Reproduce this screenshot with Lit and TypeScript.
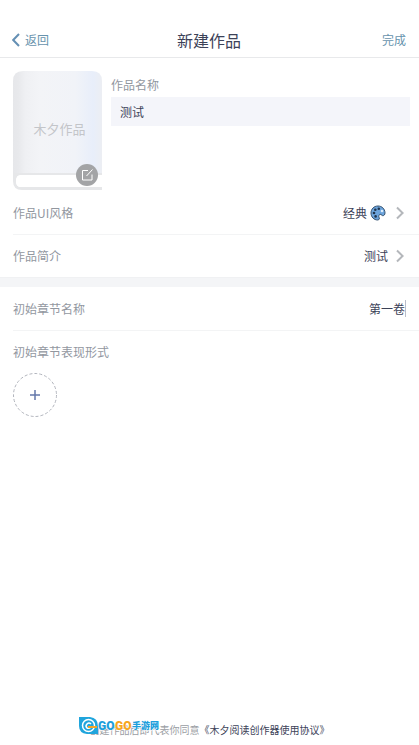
import { LitElement, html, css } from "lit";
import { customElement, property } from "lit/decorators.js";

@customElement("chevron-icon")
class ChevronIcon extends LitElement {
  static styles = css`
    :host { display: flex; color: #b4b7bb; }
    svg { width: 8px; height: 14px; fill: none; stroke: currentColor; stroke-width: 2; }
  `;
  render() {
    return html`<svg viewBox="0 0 8 14" aria-hidden="true"><path d="M1 1.5 L6.6 7 L1 12.5" /></svg>`;
  }
}

@customElement("book-cover")
class BookCover extends LitElement {
  @property() label = "";
  static styles = css`
    :host { display: block; position: relative; width: 89px; height: 119px; flex: none; }
    .art { display: block; width: 100%; height: 100%; }
    .label {
      position: absolute; left: 0; right: 0; top: 48px; padding-left: 4px;
      text-align: center; font-size: 13px; line-height: 20px; color: #c3c5c9;
    }
    .edit {
      position: absolute; right: 4px; bottom: 4px; width: 22px; height: 22px; padding: 0;
      border: 0; border-radius: 50%; background: #a3a4a6; display: grid; place-items: center;
    }
    .edit svg { width: 14px; height: 14px; fill: none; stroke: #fff; stroke-width: 1; }
  `;
  render() {
    return html`
      <svg class="art" viewBox="0 0 89 119" aria-hidden="true">
        <defs>
          <linearGradient id="face">
            <stop offset="0" stop-color="#e6e7ea" />
            <stop offset=".06" stop-color="#e8e9ec" />
            <stop offset=".14" stop-color="#eff0f3" />
            <stop offset=".3" stop-color="#f3f4f7" />
            <stop offset=".7" stop-color="#f1f3f8" />
            <stop offset=".9" stop-color="#e8eefa" />
            <stop offset="1" stop-color="#eceef3" />
          </linearGradient>
        </defs>
        <path fill="url(#face)" d="M0 10 Q0 0 10 0 H79 Q89 0 89 10 V104 H0 Z" />
        <path fill="#e6e7e9" d="M0 102 H89 V104 H8 Q3 104 3 110 Q3 116 8 116 H89 V119 H9 Q0 119 0 110 Z" />
        <path fill="#fff" d="M89 104 H8 Q3 104 3 110 Q3 116 8 116 H89 Z" />
      </svg>
      <span class="label">${this.label}</span>
      <button class="edit" aria-label="编辑封面">
        <svg viewBox="0 0 14 14"><path d="M8 2.5 H2.5 V12 H12 V6.5 M6.5 8 L12.5 1.5" /></svg>
      </button>
    `;
  }
}

@customElement("app-root")
class AppRoot extends LitElement {
  static styles = css`
    :host {
      display: flex; flex-direction: column; min-height: 100vh; background: #fff; color: #3c4258;
      font: 12px/20px "Noto Sans CJK SC", "Noto Sans", sans-serif;
    }
    * { box-sizing: border-box; }
    button, input { font: inherit; color: inherit; border: 0; background: none; padding: 0; margin: 0; outline: none; }
    header {
      display: grid; grid-template-columns: 1fr auto 1fr; align-items: center;
      padding: 22px 13px 0 12px; height: 58px; border-bottom: 1px solid #e8e9eb;
    }
    .back, .done { color: #6793ad; }
    .back { justify-self: start; display: flex; align-items: center; gap: 5px; }
    .back svg { width: 8px; height: 14px; fill: none; stroke: #6590b4; stroke-width: 2; }
    .done { justify-self: end; }
    h1 { margin: 0; font-size: 16px; line-height: 24px; font-weight: 400; }
    .work { display: flex; gap: 9px; padding: 13px 9px 1px 13px; }
    .name { flex: 1; display: flex; flex-direction: column; gap: 2px; padding-top: 4px; min-width: 0; }
    label, .caption { color: #92979f; }
    .name input { width: 100%; height: 29px; padding: 0 9px; background: #f4f5fa; }
    .row {
      display: flex; align-items: center; justify-content: space-between;
      margin-left: 13px; padding-right: 15px; height: 43px;
    }
    .row + .row { border-top: 1px solid #f3f4f5; }
    .first { border-bottom: 1px solid #f0f1f3; }
    .value { display: flex; align-items: center; gap: 3px; }
    .value chevron-icon { margin-left: 5px; }
    .palette { width: 16px; height: 16px; margin-right: 2px; }
    .band { height: 9px; background: #f4f5f7; }
    .chapter { padding-right: 13px; }
    .chapter input { text-align: right; width: 120px; }
    .field { display: flex; align-items: center; }
    .caret { width: 1px; height: 17px; background: #b9bdc9; }
    .add { display: grid; margin-left: 13px; }
    .add svg { width: 44px; height: 44px; fill: none; }
    footer {
      position: relative; margin-top: auto; padding-bottom: 5px; text-align: center;
      font-size: 10px; line-height: 20px; color: #9a9da3;
    }
    footer a { color: #3c4258; text-decoration: none; }
    .mark { position: absolute; left: calc(50% - 132px); top: -5px; width: 82px; height: 22px; overflow: visible; }
    .mark text { font-family: "Noto Sans CJK SC", sans-serif; font-weight: 900; paint-order: stroke; stroke: #fff; stroke-width: 1; }
    .mark .go { font-family: Roboto, sans-serif; }
  `;
  render() {
    return html`
      <header>
        <button class="back"><svg viewBox="0 0 8 14" aria-hidden="true"><path d="M7 1 L1.2 7 L7 13" /></svg>返回</button>
        <h1>新建作品</h1>
        <button class="done">完成</button>
      </header>
      <main>
        <section class="first">
          <div class="work">
            <book-cover label="木夕作品"></book-cover>
            <div class="name">
              <label for="title">作品名称</label>
              <input id="title" value="测试" />
            </div>
          </div>
          <div class="row">
            <span class="caption">作品UI风格</span>
            <button class="value">经典
              <svg class="palette" viewBox="0 0 16 16" aria-hidden="true">
                <path fill="#6ca4dc" stroke="#34516f" d="M8 1 C3.8 1 1 4.2 1 8 C1 12 4 15 7.6 15 C9.6 15 9.7 13.3 9 12.2 C8.3 10.8 9 9.3 10.8 9.4 L12.4 10.6 C14 11 15 9.6 15 7.8 C14.8 3.8 11.9 1 8 1Z" />
                <g fill="#20354d"><circle cx="4" cy="8" r="1.3" /><circle cx="5.3" cy="4.8" r="1.3" /><circle cx="8.8" cy="3.8" r="1.3" /><circle cx="5.6" cy="11.4" r="1.3" /></g>
                <circle cx="12" cy="6" r="1.3" fill="#dcecfa" />
              </svg>
              <chevron-icon></chevron-icon>
            </button>
          </div>
          <div class="row">
            <span class="caption">作品简介</span>
            <button class="value">测试<chevron-icon></chevron-icon></button>
          </div>
        </section>
        <div class="band"></div>
        <section>
          <div class="row chapter">
            <label for="chapter">初始章节名称</label>
            <span class="field"><input id="chapter" value="第一卷" /><i class="caret"></i></span>
          </div>
          <div class="row"><span class="caption">初始章节表现形式</span></div>
        </section>
        <button class="add" aria-label="添加">
          <svg viewBox="0 0 44 44"><circle cx="22" cy="22" r="21.5" stroke="#b2b5bd" stroke-dasharray="3 2" /><path d="M17 22 H27 M22 17 V27" stroke="#6478ab" stroke-width="1.5" /></svg>
        </button>
      </main>
      <footer>
        创建作品后即代表你同意<a href="#">《木夕阅读创作器使用协议》</a>
        <svg class="mark" viewBox="0 0 82 22">
          <path fill="#20a5dc" d="M1 2 H12 Q20 3 20 11 V19 H9 Q1 18 1 11 Z" />
          <circle cx="10.5" cy="10.5" r="6" fill="none" stroke="#fff" stroke-width="1.5" />
          <path fill="none" stroke="#fff" stroke-width="1.5" d="M13 9 Q11 7 9 9 Q7 11 9 13 Q11 14 13 12" />
          <path fill="none" stroke="#f6a524" stroke-width="2" d="M10 12 H19" />
          <text class="go" x="20" y="15" font-size="12" fill="#1e9fdc">GO</text>
          <text class="go" x="37" y="15" font-size="12" fill="#f7a51c">GO</text>
          <text x="54" y="14" font-size="9" fill="#1e9fdc">手游网</text>
        </svg>
      </footer>
    `;
  }
}
